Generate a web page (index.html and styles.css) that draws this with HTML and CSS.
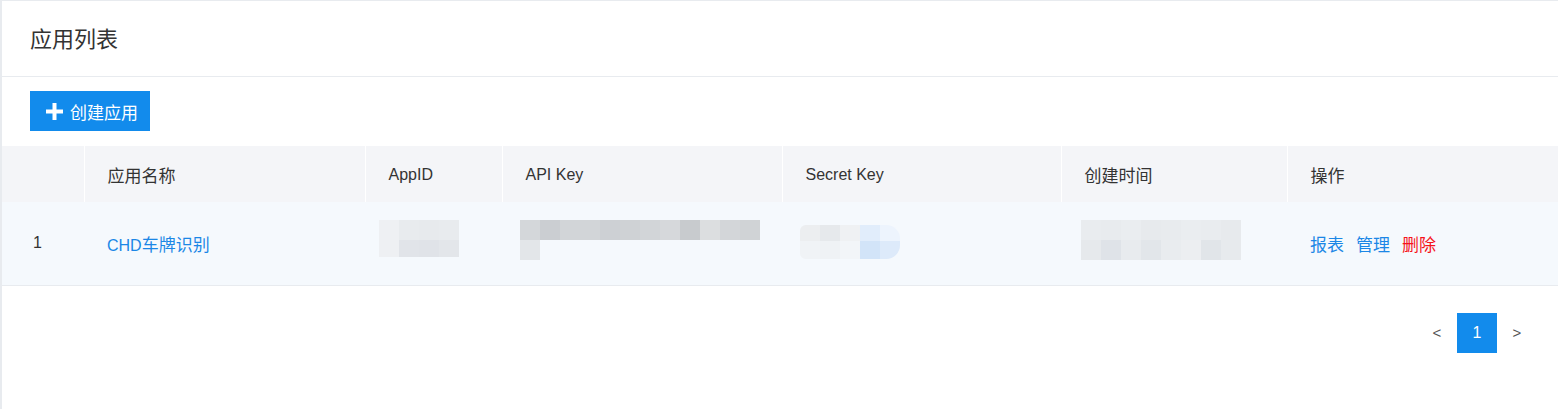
FILE: index.html
```html
<!DOCTYPE html>
<html lang="zh-CN">
<head>
<meta charset="utf-8">
<title>应用列表</title>
<link rel="stylesheet" href="styles.css">
</head>
<body>
<div class="card">
  <div class="card-head">
    <h1 class="title">应用列表</h1>
  </div>
  <div class="toolbar">
    <button class="btn-primary" type="button">
      <svg class="plus" width="17" height="17" viewBox="0 0 17 17"><path d="M8.5 0v17M0 8.5h17" stroke="#fff" stroke-width="4"/></svg>
      <span class="zh">创建应用</span>
    </button>
  </div>
  <table class="grid">
    <colgroup>
      <col class="c1"><col class="c2"><col class="c3"><col class="c4"><col class="c5"><col class="c6"><col class="c7">
    </colgroup>
    <thead>
      <tr>
        <th class="idx"></th>
        <th class="zh">应用名称</th>
        <th>AppID</th>
        <th>API Key</th>
        <th>Secret Key</th>
        <th class="zh">创建时间</th>
        <th class="zh">操作</th>
      </tr>
    </thead>
    <tbody>
      <tr>
        <td class="idx">1</td>
        <td><a class="link" href="#">CHD<span class="zh">车牌识别</span></a></td>
        <td><div class="mosaic m-appid"></div></td>
        <td><div class="mosaic m-api"></div></td>
        <td><div class="mosaic m-secret"></div></td>
        <td><div class="mosaic m-time"></div></td>
        <td class="ops zh"><a class="link" href="#">报表</a><a class="link" href="#">管理</a><a class="link danger" href="#">删除</a></td>
      </tr>
    </tbody>
  </table>
  <div class="pager">
    <span class="pg-arrow">&lt;</span>
    <span class="pg-item active">1</span>
    <span class="pg-arrow">&gt;</span>
  </div>
</div>
</body>
</html>
```
FILE: styles.css
```css
* { box-sizing: border-box; }
html, body { margin: 0; padding: 0; }
body {
  background: #e8ebef;
  font-family: "Liberation Sans", "Noto Sans CJK SC", sans-serif;
  color: #333;
  font-size: 16px;
}
.zh { font-size: 17px; }
.card {
  margin: 1px 0 0 2px;
  background: #fff;
  min-height: 408px;
}
.card-head {
  height: 76px;
  border-bottom: 1px solid #e8ebef;
  display: flex;
  align-items: center;
  padding: 2px 0 0 28px;
}
.title {
  margin: 0;
  font-size: 22px;
  font-weight: normal;
  color: #333;
  line-height: 1;
}
.toolbar {
  padding: 14px 28px 15px;
}
.btn-primary {
  display: inline-flex;
  align-items: center;
  height: 40px;
  width: 120px;
  padding: 0 0 0 16px;
  border: 0;
  background: #128bec;
  color: #fff;
  font-family: inherit;
  font-size: 16px;
  gap: 7px;
}
.plus { display: block; }
.grid {
  width: 1556px;
  border-collapse: collapse;
  table-layout: fixed;
}
.c1 { width: 82px; }
.c2 { width: 281px; }
.c3 { width: 137px; }
.c4 { width: 280px; }
.c5 { width: 279px; }
.c6 { width: 226px; }
.c7 { width: 271px; }
.grid th {
  height: 56px;
  background: #f4f5f8;
  font-weight: normal;
  text-align: left;
  padding: 1px 0 0 23px;
  border-left: 1px solid #fff;
  color: #333;
}
.grid th.idx { border-left: 0; }
.grid td {
  height: 83px;
  background: #f5f9fd;
  border-bottom: 1px solid #e8ebef;
  padding: 0 0 0 23px;
  vertical-align: middle;
}
.grid .idx { padding-left: 31px; }
.link {
  color: #1b87e6;
  text-decoration: none;
}
.ops .link { margin-right: 12px; }
.link.danger { color: #f5141b; }
.mosaic {
  height: 40px;
  margin-top: -6px;
  background-repeat: no-repeat;
}
.m-appid {
  width: 80px;
  margin-left: -9px;
  background-image:
    linear-gradient(to right, #eef0f3 0 20px, #e8ebee 20px 40px, #e7eaed 40px 60px, #e8ebee 60px 80px),
    linear-gradient(to right, #eef0f3 0 20px, #e1e4e9 20px 40px, #e0e3e8 40px 60px, #e3e6ea 60px 80px);
  background-size: 80px 20px, 80px 17px;
  background-position: 0 0, 0 20px;
}
.m-api {
  width: 240px;
  margin-left: -5px;
  background-image:
    linear-gradient(to right, #d4d7da 0 20px, #cbced2 20px 40px, #d2d5d8 40px 60px, #d2d5d8 60px 80px, #cdd0d4 80px 100px, #cfd2d5 100px 120px, #d2d5d8 120px 140px, #d6d8db 140px 160px, #c8cbce 160px 180px, #dcdee0 180px 200px, #d3d6d9 200px 220px, #d0d3d6 220px 240px),
    linear-gradient(to right, #e3e6e9 0 20px, transparent 20px);
  background-size: 240px 20px, 240px 20px;
  background-position: 0 0, 0 20px;
}
.m-secret {
  width: 100px;
  height: 34px;
  margin-top: -2px;
  margin-left: -5px;
  border-radius: 6px 14px 14px 6px;
  background-image:
    linear-gradient(to right, #eceef0 0 20px, #e6e9ec 20px 40px, #eff1f3 40px 60px, #e1edfb 60px 80px, #edf4fd 80px 100px),
    linear-gradient(to right, #f0f3f6 0 20px, #eff2f5 20px 40px, #f2f5f8 40px 60px, #d2e4f8 60px 80px, #ddeafa 80px 100px);
  background-size: 100px 16px, 100px 18px;
  background-position: 0 0, 0 16px;
}
.m-time {
  width: 160px;
  margin-left: -3px;
  background-image:
    linear-gradient(to right, #e9ecef 0 20px, #e8ebee 20px 40px, #eaedf0 40px 60px, #e7eaed 60px 80px, #e8ebee 80px 100px, #eaedf0 100px 120px, #e9ecef 120px 140px, #e7eaed 140px 160px),
    linear-gradient(to right, #e6e9ec 0 20px, #dfe3e8 20px 40px, #e8ebee 40px 60px, #e2e6ea 60px 80px, #e9ecef 80px 100px, #eceef1 100px 120px, #e1e5e9 120px 140px, #e7eaed 140px 160px);
  background-size: 160px 20px, 160px 20px;
  background-position: 0 0, 0 20px;
}
.pager {
  display: flex;
  justify-content: flex-end;
  padding: 27px 21px 0 0;
}
.pg-arrow, .pg-item {
  width: 40px;
  height: 40px;
  display: flex;
  align-items: center;
  justify-content: center;
  font-size: 15px;
  color: #555;
}
.pg-item.active {
  background: #128bec;
  color: #fff;
  font-size: 16px;
}
```
